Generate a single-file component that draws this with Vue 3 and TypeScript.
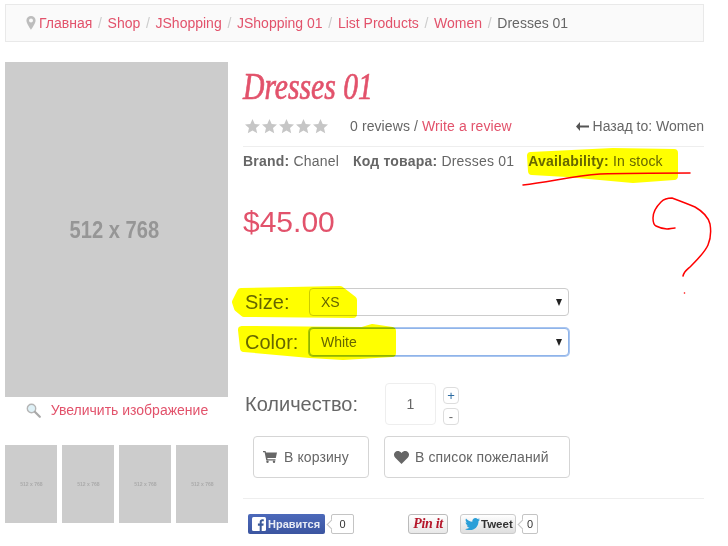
<script setup lang="ts">
const crumbs: string[] = ['Shop', 'JShopping', 'JShopping 01', 'List Products', 'Women']
const thumbs: number[] = [1, 2, 3, 4]
const stars: number[] = [1, 2, 3, 4, 5]
</script>

<template>
  <div class="page">
    <nav class="crumbs">
      <svg class="pin" width="10" height="14" viewBox="0 0 10 14"><path fill-rule="evenodd" d="M5 0a4.6 4.6 0 0 0-4.6 4.6C.4 7.6 5 14 5 14s4.600-6.400 4.600-9.400A4.600 4.600 0 0 0 5 0zm0 6.600a2 2 0 1 1 0-4 2 2 0 0 1 0 4z" fill="#bdbdbd"/></svg>
      <a class="link">Главная</a>
      <template v-for="c in crumbs" :key="c">
        <span class="sep">/</span><a class="link">{{ c }}</a>
      </template>
      <span class="sep">/</span><span>Dresses 01</span>
    </nav>

    <main class="product">
      <section class="gallery">
        <div class="hero"><span class="narrow">512 x 768</span></div>
        <div class="zoom">
          <svg width="15" height="15" viewBox="0 0 15 15"><circle cx="5.500" cy="5.500" r="4.200" fill="#dff1f7" stroke="#b5b5b5" stroke-width="1.400"/><path d="M8.800 8.800l5 5" stroke="#a9a9a9" stroke-width="2.200" stroke-linecap="round"/></svg>
          <a class="link">Увеличить изображение</a>
        </div>
        <div class="thumbs">
          <div v-for="t in thumbs" :key="t" class="thumb"><span class="narrow">512 x 768</span></div>
        </div>
      </section>

      <section class="details">
        <h1 class="title">Dresses 01</h1>
        <div class="rating">
          <div class="stars">
            <svg v-for="s in stars" :key="s" width="17" height="16" viewBox="0 0 17 16"><path d="M8.500 1l2.200 4.900 5.300.6-4 3.500 1.200 5.200-4.700-2.700-4.700 2.700L5 10 1 6.500l5.300-.6z" fill="#c6c6c6"/></svg>
          </div>
          <span class="reviews">0 reviews / <a class="link">Write a review</a></span>
          <span class="back">
            <svg width="13" height="9" viewBox="0 0 13 9"><path d="M4 0L0 4.500 4 9V5.500h9v-2H4z" fill="#555"/></svg>
            Назад to: Women
          </span>
        </div>
        <div class="meta">
          <span><b>Brand:</b> Chanel</span>
          <span><b>Код товара:</b> Dresses 01</span>
          <span class="avail"><b>Availability:</b> In stock</span>
        </div>
        <div class="price">$45.00</div>

        <div class="option first">
          <label class="opt-label">Size:</label>
          <div class="select">XS<i class="arrow"></i></div>
        </div>
        <div class="option">
          <label class="opt-label">Color:</label>
          <div class="select focus">White<i class="arrow"></i></div>
        </div>

        <div class="qty">
          <span class="qty-label">Количество:</span>
          <div class="qty-input">1</div>
          <div class="steppers">
            <span class="step plus">+</span>
            <span class="step">-</span>
          </div>
        </div>

        <div class="actions">
          <button class="btn cart">
            <svg width="14" height="12" viewBox="0 0 14 12"><path d="M0 0h2.500l.5 1.500h11L12.800 7H4.300l.3 1.200H12.500V9.500H3.300L1.600 1.300H0z" fill="#666"/><circle cx="4.500" cy="10.800" r="1.200" fill="#666"/><circle cx="11" cy="10.800" r="1.200" fill="#666"/></svg>
            В корзину
          </button>
          <button class="btn wish">
            <svg width="15" height="13" viewBox="0 0 15 13"><path d="M7.500 13L1.300 6.800C-.4 5-.4 2.600 1 1.200 2.600-.4 5.400-.3 7.500 2c2.100-2.300 4.900-2.400 6.500-.8 1.400 1.400 1.400 3.800-.3 5.600z" fill="#666"/></svg>
            В список пожеланий
          </button>
        </div>

        <div class="social">
          <a class="fb">
            <svg width="14" height="14" viewBox="0 0 14 14"><rect width="14" height="14" rx="1.500" fill="#fff"/><path d="M9.700 14V8.700h1.700l.3-2.100h-2V5.300c0-.6.200-1 1-1h1.100V2.400C11.500 2.300 11 2.300 10.400 2.300c-1.600 0-2.700 1-2.700 2.800v1.500H5.900v2.100h1.800V14z" fill="#3b5998"/></svg>
            Нравится
          </a>
          <span class="count fb-count">0</span>
          <a class="pinit">Pin it</a>
          <a class="tweet">
            <svg width="15" height="12" viewBox="0 0 15 12"><path d="M15 1.400c-.6.300-1.100.4-1.800.5.600-.4 1.100-1 1.400-1.700-.6.400-1.300.6-2 .8C12.100.4 11.300 0 10.400 0 8.700 0 7.300 1.400 7.300 3.100c0 .2 0 .5.100.7C4.900 3.700 2.600 2.500 1 .6.800 1 .600 1.600.600 2.100c0 1.100.6 2 1.400 2.600-.5 0-1-.2-1.400-.4 0 1.500 1.100 2.800 2.500 3.100-.5.100-1 .1-1.400 0 .4 1.200 1.500 2.100 2.900 2.200C3.500 10.500 1.800 11.100 0 10.900 1.400 11.700 3 12.200 4.700 12.200c5.700 0 8.800-4.700 8.800-8.800v-.4c.6-.4 1.100-1 1.500-1.600z" fill="#2b9fd8"/></svg>
            Tweet
          </a>
          <span class="count tw-count">0</span>
        </div>
      </section>
    </main>

    <svg class="marks" width="728" height="546" viewBox="0 0 728 546">
      <g class="yellow">
        <path d="M531 156L613 152 674 153 674 176 633 179 567 173 532 171z"/>
        <path d="M236 302L241 292 340 290 353 300 353 314 244 313 238 308z"/>
        <path d="M242 330L362 331 372 328 392 331 392 353 343 356 310 354 244 348z"/>
      </g>
      <g class="red">
        <path d="M523 185C550 182 572 176 600 174C630 173 660 173 690 173"/>
        <path d="M683 276C684 271 688 269 691 266C698 259 705 252 708 245C711 238 711 230 710 224C708 216 702 211 695 207C688 204 680 201 672 198C668 198 664 199 661 202C656 207 653 212 653 218C653 222 654 225 656 226C660 228 664 229 667 229C670 229 672 228 675 228"/>
        <circle cx="684.500" cy="293" r=".8"/>
      </g>
    </svg>
  </div>
</template>

<style>
body { background: #fff; }
</style>

<style scoped>
.page {
  position: relative;
  width: 728px;
  height: 546px;
  box-sizing: border-box;
  padding: 4px 24px 0 5px;
  overflow: hidden;
  font-family: "Liberation Sans", Arial, sans-serif;
  font-size: 14px;
  color: #666;
}
.link { color: #e2526b; }
.crumbs {
  display: flex;
  align-items: center;
  box-sizing: border-box;
  height: 38px;
  padding-left: 20px;
  background: #fafafa;
  border: 1px solid #e9e9e9;
  white-space: nowrap;
}
.pin { margin-right: 3px; }
.sep { color: #ccc; margin: 0 5.700px; }
.product {
  display: flex;
  gap: 15px;
  margin-top: 20px;
}
.gallery { width: 223px; flex: none; }
.narrow {
  display: inline-block;
  transform: scaleX(.84);
  white-space: nowrap;
}
.hero {
  height: 335px;
  box-sizing: border-box;
  padding-right: 4px;
  background: #ccc;
  display: flex;
  align-items: center;
  justify-content: center;
  color: #969696;
  font-weight: 700;
  font-size: 24px;
}
.zoom {
  display: flex;
  align-items: center;
  justify-content: center;
  gap: 10px;
  height: 26px;
  padding-left: 1px;
}
.thumbs {
  display: flex;
  justify-content: space-between;
  margin-top: 22px;
}
.thumb {
  width: 52px;
  height: 78px;
  background: #ccc;
  display: flex;
  align-items: center;
  justify-content: center;
  color: #aaa;
  font-size: 6px;
  font-weight: 700;
}
.details { flex: 1; min-width: 0; }
.title {
  margin: 0;
  height: 50px;
  font-family: "Liberation Serif", serif;
  font-style: italic;
  font-weight: 400;
  font-size: 38px;
  line-height: 48px;
  color: #e2526b;
  -webkit-text-stroke: .7px #e2526b;
  transform: scaleX(.78);
  transform-origin: left center;
  white-space: nowrap;
}
.rating {
  display: flex;
  align-items: center;
  height: 28px;
  padding-left: 1px;
  border-bottom: 1px solid #eee;
  padding-bottom: 6px;
}
.stars { display: flex; width: 106px; flex: none; }
.reviews { flex: 1; letter-spacing: .1px; }
.back { display: flex; align-items: center; gap: 4px; }
.meta {
  display: flex;
  align-items: center;
  height: 28px;
  white-space: nowrap;
  letter-spacing: .2px;
}
.meta span { margin-right: 14px; }
.price {
  margin-top: 27px;
  font-size: 30px;
  line-height: 40px;
  color: #e2526b;
}
.option {
  display: flex;
  align-items: center;
  margin-top: 12px;
  padding-left: 2px;
}
.option.first { margin-top: 46px; }
.opt-label {
  width: 64px;
  font-size: 20px;
}
.select {
  position: relative;
  box-sizing: border-box;
  width: 260px;
  height: 28px;
  padding-left: 11px;
  display: flex;
  align-items: center;
  border: 1px solid #ccc;
  border-radius: 4px;
  background: #fff;
}
.select.focus {
  border-color: #8fb4ea;
  box-shadow: 0 0 0 1px #a9c5ef;
}
.arrow {
  position: absolute;
  right: 6px;
  top: 10px;
  border-left: 3.500px solid transparent;
  border-right: 3.500px solid transparent;
  border-top: 7px solid #222;
}
.qty {
  display: flex;
  align-items: center;
  margin-top: 27px;
  padding-left: 2px;
}
.qty-label {
  width: 140px;
  font-size: 20px;
}
.qty-input {
  box-sizing: border-box;
  width: 51px;
  height: 42px;
  display: flex;
  align-items: center;
  justify-content: center;
  border: 1px solid #eee;
  border-radius: 4px;
}
.steppers {
  display: flex;
  flex-direction: column;
  gap: 4px;
  margin-left: 7px;
  margin-top: 3px;
}
.step {
  box-sizing: border-box;
  width: 16px;
  height: 17px;
  display: flex;
  align-items: center;
  justify-content: center;
  border: 1px solid #ddd;
  border-radius: 4px;
  font-size: 13px;
  line-height: 1;
}
.step.plus { color: #2d6ca2; }
.actions {
  display: flex;
  gap: 15px;
  margin-top: 11px;
  padding-left: 10px;
}
.btn {
  box-sizing: border-box;
  height: 42px;
  display: flex;
  align-items: center;
  gap: 7px;
  padding: 0 0 0 9px;
  background: #fff;
  border: 1px solid #d5d5d5;
  border-radius: 4px;
  color: #666;
  font-family: inherit;
  font-size: 14px;
  letter-spacing: .1px;
}
.cart { width: 116px; }
.wish { width: 186px; gap: 6px; }
.social {
  display: flex;
  align-items: center;
  height: 20px;
  margin-top: 20px;
  padding-top: 15px;
  padding-left: 5px;
  border-top: 1px solid #eee;
}
.fb {
  box-sizing: border-box;
  width: 77px;
  height: 20px;
  display: flex;
  align-items: center;
  gap: 2px;
  padding-left: 4px;
  border-radius: 2px;
  background: linear-gradient(#4c69ba, #3b55a0);
  color: #e8ecf5;
  font-size: 11px;
  font-weight: 700;
  white-space: nowrap;
}
.count {
  position: relative;
  box-sizing: border-box;
  height: 20px;
  display: flex;
  align-items: center;
  justify-content: center;
  border: 1px solid #c4c4c4;
  border-radius: 2px;
  background: #fff;
  color: #333;
  font-size: 11px;
}
.count::before {
  content: "";
  position: absolute;
  left: -4px;
  top: 6px;
  width: 6px;
  height: 6px;
  background: #fff;
  border-left: 1px solid #c4c4c4;
  border-bottom: 1px solid #c4c4c4;
  transform: rotate(45deg);
}
.fb-count { width: 23px; margin-left: 6px; }
.tw-count { width: 16px; margin-left: 6px; }
.pinit {
  box-sizing: border-box;
  width: 40px;
  height: 20px;
  margin-left: 54px;
  display: flex;
  align-items: center;
  justify-content: center;
  border: 1px solid #bbb;
  border-radius: 3px;
  background: linear-gradient(#fff, #e8e8e8);
  color: #b5172b;
  font-family: "Liberation Serif", serif;
  font-style: italic;
  font-weight: 700;
  font-size: 14px;
  letter-spacing: -.3px;
  white-space: nowrap;
}
.tweet {
  box-sizing: border-box;
  width: 56px;
  height: 20px;
  margin-left: 12px;
  display: flex;
  align-items: center;
  gap: 1px;
  padding-left: 4px;
  border: 1px solid #ccc;
  border-radius: 3px;
  background: linear-gradient(#fff, #dedede);
  color: #333;
  font-size: 11.500px;
  font-weight: 700;
}
.marks {
  position: absolute;
  left: 0;
  top: 0;
  pointer-events: none;
  mix-blend-mode: multiply;
}
.yellow path {
  fill: #ffff00;
  stroke: #ffff00;
  stroke-width: 8;
  stroke-linejoin: round;
}
.red path {
  fill: none;
  stroke: #f00;
  stroke-width: 1.500;
  stroke-linecap: round;
  stroke-linejoin: round;
}
.red circle { fill: #f00; }
</style>
